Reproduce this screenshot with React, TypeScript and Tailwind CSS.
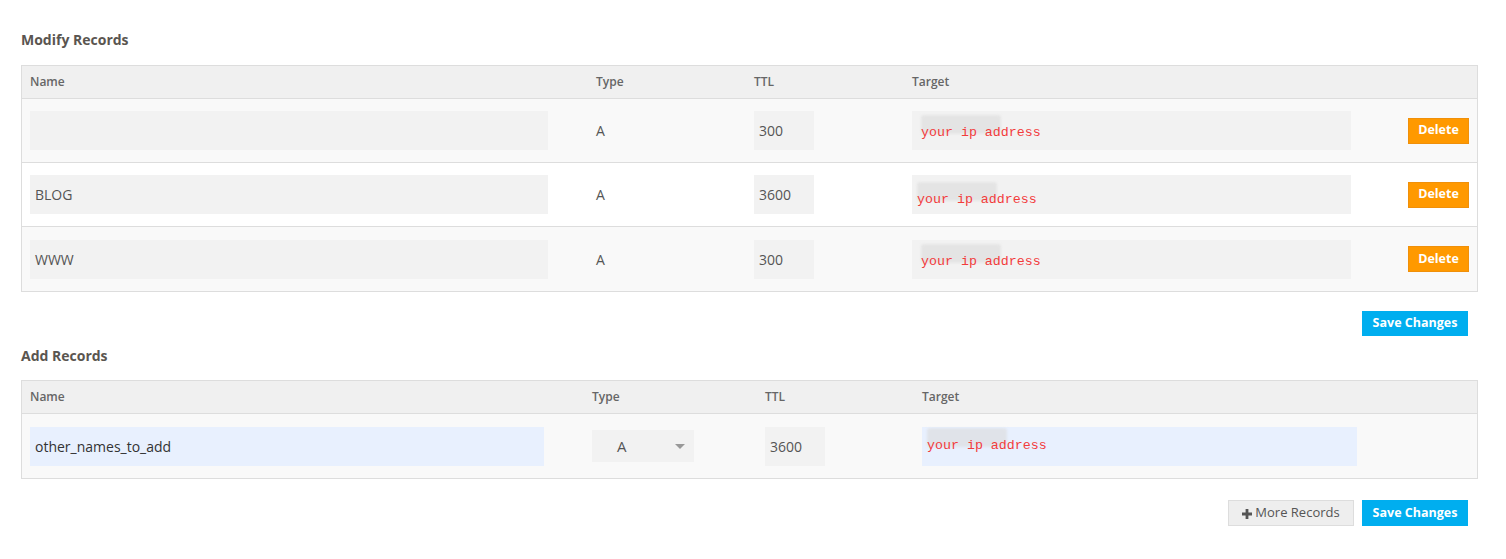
type Rec = { name: string; ttl: string; shift?: string };

const records: Rec[] = [
  { name: "", ttl: "300" },
  { name: "BLOG", ttl: "3600", shift: "pl-[5px] pt-[5px]" },
  { name: "WWW", ttl: "300" },
];

function IpText({ className = "" }: { className?: string }) {
  return (
    <span className={`relative inline-block ${className}`}>
      <span className="absolute left-0 top-[-3px] h-[19px] w-[80px] rounded-[3px] bg-[#dcdcdc] opacity-60 blur-[1px]" />
      <span className="relative font-['Liberation_Mono',monospace] text-[13.3px] text-[#f23c3c]">your ip address</span>
    </span>
  );
}

function Header({ cols }: { cols: string }) {
  return (
    <div className={`grid ${cols} h-[33px] items-center border-b border-[#dddddd] bg-[#f0f0f0] text-[12px] font-semibold text-[#666]`}>
      <div className="px-[8px]">Name</div>
      <div className="px-[8px]">Type</div>
      <div className="px-[8px]">TTL</div>
      <div className="px-[8px]">Target</div>
      <div />
    </div>
  );
}

export default function App() {
  const modCols = "grid-cols-[566px_158px_158px_495px_1fr]";
  const addCols = "grid-cols-[562px_173px_157px_1fr_0px]";
  return (
    <div className="min-h-screen bg-white px-[21px] pt-[31px] font-['Open_Sans',sans-serif] text-[#555]">
      <h2 className="text-[14px] font-bold leading-[18px] text-[#5a5550]">Modify Records</h2>

      <div className="mt-[16px] w-[1457px] border border-[#dddddd]">
        <Header cols={modCols} />
        {records.map((r, i) => (
          <div
            key={i}
            className={`grid ${modCols} h-[64px] items-center ${i < records.length - 1 ? "border-b border-[#dddddd]" : ""} ${i % 2 === 0 ? "bg-[#f9f9f9]" : "bg-white"}`}
          >
            <div className="px-[8px]">
              <div className="flex h-[39px] w-[518px] items-center bg-[#f2f2f2] px-[5px] text-[14px] text-[#555]">{r.name}</div>
            </div>
            <div className="px-[8px] text-[14px] font-medium text-[#555]">A</div>
            <div className="px-[8px]">
              <div className="flex h-[39px] w-[60px] items-center bg-[#f2f2f2] px-[5px] text-[14px] text-[#555]">{r.ttl}</div>
            </div>
            <div className="px-[8px]">
              <div className={`flex h-[39px] w-[439px] items-center bg-[#f2f2f2] ${r.shift ?? "pl-[9px]"}`}>
                <IpText />
              </div>
            </div>
            <div className="flex justify-end pr-[8px]">
              <button className="h-[26px] w-[61px] border border-[#f0900a] bg-[#ff9900] text-[12.5px] font-bold text-white">Delete</button>
            </div>
          </div>
        ))}
      </div>

      <div className="mt-[19px] flex w-[1447px] justify-end">
        <button className="h-[25px] w-[106px] bg-[#00aeef] text-[12.5px] font-bold text-white">Save Changes</button>
      </div>

      <h2 className="mt-[11px] text-[14px] font-bold leading-[18px] text-[#5a5550]">Add Records</h2>

      <div className="mt-[15px] w-[1457px] border border-[#dddddd]">
        <Header cols={addCols} />
        <div className={`grid ${addCols} h-[64px] items-center bg-[#f9f9f9]`}>
          <div className="px-[8px]">
            <div className="flex h-[39px] w-[514px] items-center bg-[#e8f0fe] px-[5px] text-[14px] text-[#333]">other_names_to_add</div>
          </div>
          <div className="px-[8px]">
            <div className="relative flex h-[32px] w-[102px] items-center bg-[#f2f2f2] pl-[25px] text-[15px] text-[#555]">
              A
              <span className="absolute right-[9px] top-[14px] h-0 w-0 border-x-[5px] border-t-[5px] border-x-transparent border-t-[#999]" />
            </div>
          </div>
          <div className="px-[8px]">
            <div className="flex h-[39px] w-[60px] items-center bg-[#f2f2f2] px-[5px] text-[14px] text-[#555]">3600</div>
          </div>
          <div className="px-[8px]">
            <div className="flex h-[39px] w-[435px] items-start bg-[#e8f0fe] pl-[5px] pt-[4px]">
              <IpText />
            </div>
          </div>
          <div />
        </div>
      </div>

      <div className="mt-[21px] flex w-[1447px] justify-end gap-[8px]">
        <button className="flex h-[26px] w-[126px] items-center justify-center gap-[3px] border border-[#dddddd] bg-[#eeeeee] text-[13px] text-[#555]">
          <svg width="10" height="10" viewBox="0 0 10 10" className="mt-[1px]">
            <path d="M3.6 0h2.8v3.6H10v2.8H6.4V10H3.6V6.4H0V3.6h3.6z" fill="#555" />
          </svg>
          More Records
        </button>
        <button className="h-[26px] w-[106px] bg-[#00aeef] text-[12.5px] font-bold text-white">Save Changes</button>
      </div>
    </div>
  );
}
